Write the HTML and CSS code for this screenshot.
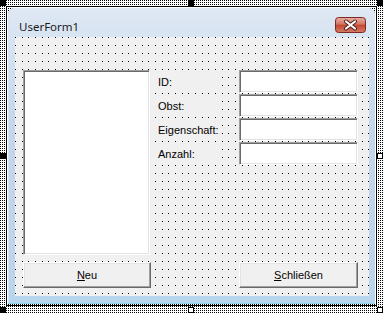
FILE: index.html
```html
<!DOCTYPE html>
<html lang="de">

<head>
    <meta charset="UTF-8">
    <meta name="viewport" content="width=device-width, initial-scale=1.0">
    <title>UserForm1</title>
    <link rel="stylesheet" href="styles.css">
</head>

<body>
    <div id="stage">
        <div class="frame">
            <div class="window">
                <div class="titlebar">
                    <span class="title">UserForm1</span>
                    <span class="close">
                        <svg width="31" height="16" viewBox="0 0 31 16">
                            <defs>
                                <linearGradient id="cb" x1="0" y1="0" x2="0" y2="1">
                                    <stop offset="0" stop-color="#eab0a4" />
                                    <stop offset="0.45" stop-color="#d27563" />
                                    <stop offset="0.5" stop-color="#c4452f" />
                                    <stop offset="1" stop-color="#d57d68" />
                                </linearGradient>
                            </defs>
                            <rect x="0.5" y="0.5" width="30" height="15" rx="3" fill="url(#cb)" stroke="#7a2a1f" />
                            <path d="M11 4.5 L20 11.5 M20 4.5 L11 11.5" stroke="#4a1d16" stroke-width="4" stroke-linecap="round" />
                            <path d="M11 4.5 L20 11.5 M20 4.5 L11 11.5" stroke="#fff" stroke-width="2.2" stroke-linecap="round" />
                        </svg>
                    </span>
                </div>
                <div class="client">
                    <div class="top">
                        <div class="listbox"></div>
                        <div class="fields">
                            <span class="field">ID:</span>
                            <input type="text" class="textbox" />
                            <span class="field">Obst:</span>
                            <input type="text" class="textbox" />
                            <span class="field">Eigenschaft:</span>
                            <input type="text" class="textbox" />
                            <span class="field">Anzahl:</span>
                            <input type="text" class="textbox" />
                        </div>
                    </div>
                    <div class="buttons">
                        <button class="btn btn-new"><u>N</u>eu</button>
                        <button class="btn btn-close"><u>S</u>chließen</button>
                    </div>
                </div>
            </div>
        </div>

        <span class="handle h-tl"></span>
        <span class="handle h-tm"></span>
        <span class="handle h-tr"></span>
        <span class="handle h-ml"></span>
        <span class="handle h-bl"></span>
        <span class="handle open h-mr"></span>
        <span class="handle open h-bm"></span>
        <span class="handle open h-br"></span>
    </div>
</body>

</html>
```

FILE: styles.css
```css
body {
    margin: 0;
    width: 383px;
    height: 313px;
    overflow: hidden;
    background: #fff;
    background-image: conic-gradient(at 1px 1px, #fff 75%, #000 0);
    background-size: 2px 2px;
}

#stage {
    position: relative;
    width: 383px;
    height: 313px;
    padding-top: 6px;
    padding-left: 6px;
    box-sizing: border-box;
}

.frame {
    width: 367px;
    height: 296px;
    border: 1px solid #000;
    padding: 1px;
}

.window {
    height: 100%;
    box-sizing: border-box;
    display: flex;
    flex-direction: column;
    padding: 0 6px 8px 7px;
    border-radius: 6px 6px 0 0;
    background: linear-gradient(#dfe8f4, #c4d6ec 40%, #bfd3ea 85%, #b7d6ee);
    box-shadow: inset 0 -1px #8fd3ef, inset 1px 0 #d7e4f3;
}

.titlebar {
    height: 29px;
    display: flex;
    justify-content: space-between;
    align-items: flex-start;
}

.title {
    margin-top: 12px;
    margin-left: 4px;
    font-family: "Noto Sans", sans-serif;
    font-size: 11.5px;
    line-height: 14px;
    color: #1b1b1b;
}

.close {
    margin-top: 9px;
    margin-right: 3px;
    height: 16px;
}

.close svg {
    display: block;
}

/* grid: 5pt x 6pt -> 6.67px x 8px */
.client {
    flex: 1;
    padding: 33px 11px 0 8px;
    background-color: #f0f0f0;
    background-image:
        conic-gradient(at 1px 1px, transparent 75%, #000 0),
        conic-gradient(at 1px 1px, transparent 75%, #000 0),
        conic-gradient(at 1px 1px, transparent 75%, #000 0);
    background-size: 20px 8px;
    background-position: 0 0, 7px 0, 13px 0;
}

.top {
    display: flex;
}

.listbox {
    width: 125px;
    height: 183px;
    background: #fff;
    border: 1px solid;
    border-color: #a0a0a0 #fff #fff #a0a0a0;
    box-shadow: inset 1px 1px #696969, inset -1px -1px #e3e3e3;
}

.fields {
    margin-left: 5px;
    display: grid;
    grid-template-columns: 84px 119px;
    grid-auto-rows: 23px;
    row-gap: 1px;
}

.field {
    width: 62px;
    display: flex;
    align-items: center;
    padding-left: 3px;
    padding-top: 1px;
    background: #f0f0f0;
    font-family: "Liberation Sans", Arial, sans-serif;
    font-size: 11px;
    color: #000;
}

.textbox {
    width: 119px;
    height: 23px;
    box-sizing: border-box;
    margin: 0;
    padding: 0;
    background: #fff;
    border: 1px solid;
    border-color: #a0a0a0 #fff #fff #a0a0a0;
    box-shadow: inset 1px 1px #696969, inset -1px -1px #e3e3e3;
    outline: none;
}

.buttons {
    margin-top: 7px;
    display: flex;
    justify-content: space-between;
}

.btn {
    height: 26px;
    margin: 0;
    padding: 0;
    background: #f0f0f0;
    border: 1px solid;
    border-color: #fff #696969 #696969 #fff;
    box-shadow: inset -1px -1px #a0a0a0, inset 1px 1px #e3e3e3;
    font-family: "Liberation Sans", Arial, sans-serif;
    font-size: 11px;
    color: #000;
}

.btn-new {
    width: 128px;
}

.btn-close {
    width: 119px;
}

.handle {
    position: absolute;
    width: 6px;
    height: 6px;
    box-sizing: border-box;
    background: #000;
}

.handle.open {
    background: #fff;
    border: 1px solid #000;
}

.h-tl { left: 0; top: 0; }
.h-tm { left: 188px; top: 0; }
.h-tr { left: 377px; top: 0; }
.h-ml { left: 0; top: 153px; }
.h-mr { left: 377px; top: 153px; }
.h-bl { left: 0; top: 307px; }
.h-bm { left: 188px; top: 307px; }
.h-br { left: 377px; top: 307px; }
```
